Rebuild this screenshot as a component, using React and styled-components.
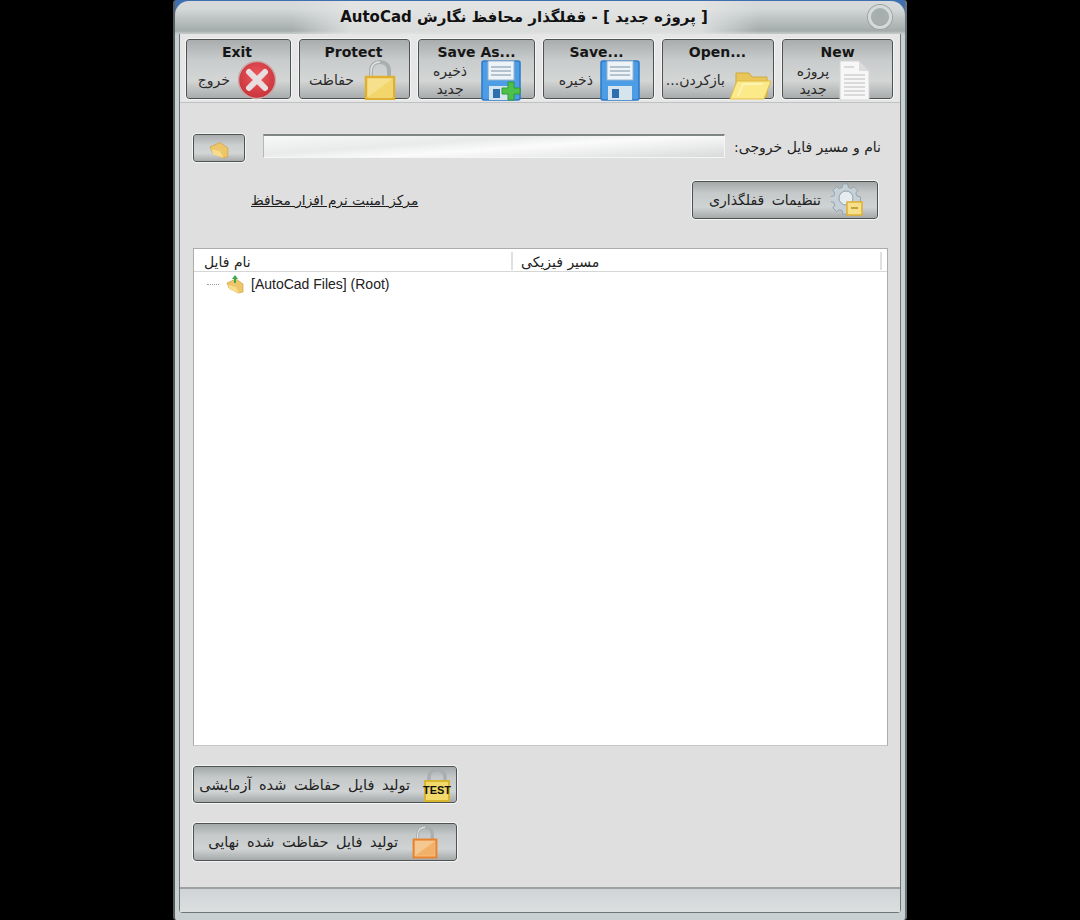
import React from "react";
import styled, { createGlobalStyle } from "styled-components";

const Global = createGlobalStyle`
  html, body { margin: 0; padding: 0; background: #000; }
  body { font-family: "DejaVu Sans", "Liberation Sans", sans-serif; color: #1a1a1a; }
`;

const Win = styled.div`
  width: 734px;
  height: 920px;
  margin: 0 auto;
  box-sizing: border-box;
  display: flex;
  flex-direction: column;
  background: linear-gradient(180deg, #3f6fae 0, #3f6fae 14px, #c9d0d2 15px, #c9d0d2 100%);
  border-radius: 3px;
  overflow: hidden;
  border-left: 2px solid #555b5d;
  border-right: 2px solid #69757a;
`;

const TitleBar = styled.div`
  height: 33px;
  flex: none;
  display: flex;
  align-items: center;
  justify-content: center;
  position: relative;
  border-radius: 14px 14px 0 0;
  margin-top: 1px;
  background:
    linear-gradient(90deg, rgba(228, 229, 229, 0) 16%, rgba(228, 229, 229, 0.85) 24%, rgba(228, 229, 229, 0.85) 72%, rgba(228, 229, 229, 0) 80%),
    linear-gradient(180deg, #d6dada 0, #d4d8d8 8px, #bcc3c3 18px, #a4abab 30px, #c0c5c5 32px);
`;

const TitleText = styled.div`
  font-size: 15px;
  font-weight: bold;
  color: #111;
  white-space: nowrap;
  margin-left: -32px;
  margin-top: -1px;
`;

const WinDot = styled.div`
  position: absolute;
  right: 13px;
  top: 4px;
  width: 24px;
  height: 24px;
  box-sizing: border-box;
  border-radius: 50%;
  border: 3px solid #d5d9d9;
  background: radial-gradient(circle at 50% 45%, #a5acac 0, #a9b0b0 55%, #8b9494 100%);
  box-shadow: 0 0 0 1px #9aa3a3;
`;

const Client = styled.div`
  flex: 1;
  margin: -1px 4px 7px;
  display: flex;
  flex-direction: column;
  background: #dfdfdf;
  border: 1px solid #6d7676;
  border-top: none;
  border-radius: 0 0 4px 4px;
`;

const Toolbar = styled.div`
  height: 70px;
  flex: none;
  box-sizing: border-box;
  padding: 6px 7px 4px 6px;
  display: flex;
  gap: 8px;
  background: #e6e6e6;
  border-bottom: 1px solid #bfc2c2;
`;

const ToolBtn = styled.div`
  width: ${(p) => p.$w}px;
  height: 60px;
  box-sizing: border-box;
  border: 1px solid #4d5252;
  border-radius: 3px;
  outline: 1px solid #f4f4f4;
  background: linear-gradient(180deg, #a9adad 0, #c9cccc 35%, #d4d6d6 70%, #a9acac 100%);
  display: flex;
  flex-direction: column;
`;

const ToolTitle = styled.div`
  font-size: 14px;
  font-weight: bold;
  line-height: 16px;
  padding-top: 4px;
  text-align: center;
  color: #161616;
  height: 18px;
  flex: none;
  padding-right: ${(p) => p.$shift || 0}px;
`;

const ToolBody = styled.div`
  flex: 1;
  min-height: 0;
  display: flex;
  align-items: center;
  justify-content: flex-end;
  gap: ${(p) => p.$gap}px;
  padding-right: ${(p) => p.$pr}px;
`;

const ToolLabel = styled.div`
  direction: rtl;
  font-size: 14px;
  line-height: 18px;
  text-align: center;
  color: #2a2a2a;
  white-space: ${(p) => (p.$wrap ? "normal" : "nowrap")};
  width: ${(p) => (p.$wrap ? p.$wrap + "px" : "auto")};
`;

const IconSvg = styled.svg`
  flex: none;
  display: block;
  position: relative;
  margin-top: ${(p) => p.$mt || 0}px;
`;

const Main = styled.div`
  flex: 1;
  display: flex;
  flex-direction: column;
  padding: 31px 12px 0 13px;
`;

const PathRow = styled.div`
  display: flex;
  align-items: flex-start;
  height: 28px;
`;

const BrowseBtn = styled.div`
  width: 52px;
  height: 28px;
  box-sizing: border-box;
  border: 1px solid #4d5252;
  border-radius: 3px;
  outline: 1px solid #f4f4f4;
  background: linear-gradient(180deg, #a9adad 0, #cdd0d0 40%, #d3d5d5 70%, #a9acac 100%);
  display: flex;
  align-items: center;
  justify-content: center;
`;

const PathInput = styled.div`
  width: 462px;
  height: 24px;
  margin-left: 18px;
  box-sizing: border-box;
  border-top: 2px solid #7f8585;
  border-left: 1px solid #b3b7b7;
  border-right: 1px solid #f5f5f5;
  border-bottom: 1px solid #f5f5f5;
  background: linear-gradient(176deg, #f7f8f8 0, #e9ebeb 35%, #fbfbfb 55%, #d8dada 100%);
`;

const PathLabel = styled.div`
  direction: rtl;
  width: 148px;
  margin-left: 8px;
  line-height: 24px;
  padding-top: 1px;
  font-size: 14px;
  white-space: nowrap;
  color: #222;
`;

const LinkRow = styled.div`
  display: flex;
  align-items: center;
  justify-content: space-between;
  height: 38px;
  margin-top: 19px;
  padding: 0 10px 0 58px;
`;

const SecurityLink = styled.a`
  direction: rtl;
  font-size: 13.7px;
  color: #1c1c1c;
  text-decoration: underline;
  white-space: nowrap;
`;

const ActionBtn = styled.div`
  width: ${(p) => p.$w}px;
  height: ${(p) => p.$h}px;
  box-sizing: border-box;
  border: 1px solid #4d5252;
  border-radius: 3px;
  outline: 1px solid #f4f4f4;
  background: linear-gradient(180deg, #a3a8a8 0, #c6c9c9 30%, #d0d3d3 70%, #a6a9a9 100%);
  display: flex;
  align-items: center;
  justify-content: flex-end;
  gap: ${(p) => p.$gap}px;
  padding-right: ${(p) => p.$pr}px;
`;

const ActionText = styled.div`
  direction: rtl;
  font-size: ${(p) => p.$size}px;
  word-spacing: 3px;
  white-space: nowrap;
  color: #222;
`;

const TreeTable = styled.div`
  height: 498px;
  margin-top: 29px;
  flex: none;
  box-sizing: border-box;
  background: #fff;
  border: 1px solid #a9adad;
  border-bottom-color: #c4c6c6;
`;

const TreeHead = styled.div`
  height: 22px;
  display: grid;
  grid-template-columns: 319px 369px;
  border-bottom: 1px solid #d5d7d7;
`;

const HeadCell = styled.div`
  direction: rtl;
  text-align: left;
  font-size: 14px;
  padding-left: ${(p) => p.$pl}px;
  color: #222;
  height: 18px;
  margin-top: 3px;
  line-height: 20px;
  border-right: 2px solid #dfe1e1;
`;

const TreeRow = styled.div`
  display: flex;
  align-items: center;
  height: 24px;
  padding-left: 13px;
`;

const TreeDots = styled.div`
  width: 12px;
  border-top: 1px dotted #9a9a9a;
  margin-right: 6px;
`;

const TreeName = styled.div`
  font-family: "Liberation Sans", Arial, sans-serif;
  font-size: 14px;
  color: #222;
  margin-left: 6px;
`;

const BottomButtons = styled.div`
  display: flex;
  flex-direction: column;
  gap: 20px;
  margin-top: 20px;
`;

const StatusBar = styled.div`
  height: 23px;
  margin-top: auto;
  flex: none;
  background: linear-gradient(180deg, #d0d4d6, #dcdfe0);
  border-top: 2px solid #9ca1a1;
`;

const Exit = () => (
  <IconSvg width="40" height="40" viewBox="0 0 40 40">
    <defs>
      <radialGradient id="ex" cx="50%" cy="40%" r="60%">
        <stop offset="0" stopColor="#ee5a60" />
        <stop offset="1" stopColor="#c8323a" />
      </radialGradient>
    </defs>
    <circle cx="20" cy="20" r="18.5" fill="url(#ex)" stroke="#c9a5a5" strokeWidth="1.5" />
    <path d="M12 12l16 16M28 12L12 28" stroke="#e9dede" strokeWidth="6" strokeLinecap="round" />
  </IconSvg>
);

const Padlock = ({ size = 32, h = 40, body = "#f2cf55", inner = "#f6e08c", edge = "#e0b030" }) => (
  <IconSvg width={size} height={h} viewBox="0 0 32 40">
    <path d="M7 20V11C7 5 11 2 16 2s9 3 9 9v9" fill="none" stroke="#a9afb1" strokeWidth="4" />
    <path d="M7 20V11C7 5 11 2 16 2" fill="none" stroke="#e2e5e5" strokeWidth="1.4" />
    <rect x="2" y="17" width="28" height="22" fill={inner} stroke={edge} strokeWidth="2.5" />
    <path d="M4 37L28 19V37z" fill={body} opacity=".6" />
  </IconSvg>
);

const Floppy = ({ plus }) => (
  <IconSvg width="40" height="41" viewBox="0 0 40 41">
    <rect x="1" y="1" width="38" height="39" rx="2" fill="#4c9de6" stroke="#2b78c8" strokeWidth="1.5" />
    <rect x="7" y="1" width="26" height="19" fill="#eef3f7" stroke="#98b4cc" />
    <path d="M10 7h20M10 11h20M10 15h20" stroke="#9fb2c2" strokeWidth="1.3" />
    <rect x="8" y="26" width="24" height="14" fill="#d6e4ee" />
    <rect x="12" y="29" width="7" height="9" fill="#2f6fb0" />
    {plus && <path d="M27 22h6v6h6v6h-6v6h-6v-6h-6v-6h6z" fill="#4cc04a" stroke="#2f9a33" />}
  </IconSvg>
);

const Folder = () => (
  <IconSvg width="43" height="30" viewBox="0 0 43 30" $mt="10">
    <path d="M7 27V3h13l3 4h15v20z" fill="#e8c65a" stroke="#d1a93a" />
    <path d="M1 29L8 11h34l-7 18z" fill="#fbe98a" stroke="#e0bb44" />
    <path d="M9 26l5-12h20" fill="none" stroke="#fdf5bf" strokeWidth="1.5" />
  </IconSvg>
);

const Doc = () => (
  <IconSvg width="31" height="41" viewBox="0 0 31 41">
    <path d="M1 1h19l10 10v29H1z" fill="#f7f7f7" stroke="#d4d4d4" />
    <path d="M20 1v10h10z" fill="#dcdcdc" />
    <path d="M5 7h10M5 15h21M5 19h21M5 23h21M5 27h21M5 31h21M5 35h21" stroke="#bdbdbd" />
  </IconSvg>
);

const Gear = () => (
  <IconSvg width="32" height="34" viewBox="0 0 32 34">
    <path
      d="M13 1h5l1 4 3 1 3-2 4 4-2 3 1 3 4 1v5l-4 1-1 3 2 3-4 4-3-2-3 1-1 4h-5l-1-4-3-1-3 2-4-4 2-3-1-3-4-1v-5l4-1 1-3-2-3 4-4 3 2 3-1z"
      fill="#c6d0d6"
      stroke="#8ea0ac"
      transform="scale(.92)"
    />
    <circle cx="15" cy="15" r="7" fill="#e6ecef" stroke="#8ea0ac" />
    <rect x="16" y="19" width="15" height="13" fill="#f6e08c" stroke="#e0b030" strokeWidth="1.5" />
    <path d="M20 25h7" stroke="#b58c20" strokeWidth="1.5" />
  </IconSvg>
);

const SmallFolder = ({ arrow, size = 20 }) => (
  <IconSvg width={size} height={size} viewBox="0 0 20 20">
    <path d="M2 9l9-4 7 5v8l-5 1L4 14z" fill="#eec66a" stroke="#cfa23c" strokeWidth=".7" />
    <path d="M3 11l8 2 3 6-9-3z" fill="#f7dc8c" />
    {arrow && <path d="M10 1l3 4h-2v4H9V5H7z" fill="#3da94a" />}
  </IconSvg>
);

const TestLock = () => (
  <IconSvg width="30" height="34" viewBox="0 0 30 34">
    <path d="M7 15V9c0-5 4-7 8-7s8 2 8 7v6" fill="none" stroke="#a9afb1" strokeWidth="3.5" />
    <rect x="3" y="13" width="24" height="20" fill="#f2d96a" stroke="#d8b52e" strokeWidth="2" />
    <text x="15" y="26" textAnchor="middle" fontFamily="Liberation Sans" fontWeight="bold" fontSize="11" fill="#111">
      TEST
    </text>
  </IconSvg>
);

const tools = [
  { title: "Exit", label: "خروج", w: 105, gap: 7, pr: 13, icon: <Exit />, shift: 3 },
  { title: "Protect", label: "حفاظت", w: 111, gap: 10, pr: 13, icon: <Padlock />, shift: 2 },
  { title: "Save As...", label: "ذخیره جدید", wrap: 44, w: 117, gap: 9, pr: 13, icon: <Floppy plus /> },
  { title: "Save...", label: "ذخیره", w: 111, gap: 7, pr: 13, icon: <Floppy />, shift: 4 },
  { title: "Open...", label: "بازکردن...", w: 112, gap: 4, pr: 1, icon: <Folder />, shift: 1 },
  { title: "New", label: "پروژه جدید", wrap: 40, w: 111, gap: 6, pr: 22, icon: <Doc /> },
];

export default function App() {
  return (
    <>
      <Global />
      <Win>
        <TitleBar>
          <TitleText dir="rtl">[ پروژه جدید ] - قفلگذار محافظ نگارش AutoCad</TitleText>
          <WinDot />
        </TitleBar>
        <Client>
          <Toolbar>
            {tools.map((t) => (
              <ToolBtn key={t.title} $w={t.w}>
                <ToolTitle $shift={t.shift}>{t.title}</ToolTitle>
                <ToolBody $gap={t.gap} $pr={t.pr}>
                  <ToolLabel $wrap={t.wrap}>{t.label}</ToolLabel>
                  {t.icon}
                </ToolBody>
              </ToolBtn>
            ))}
          </Toolbar>
          <Main>
            <PathRow>
              <BrowseBtn>
                <SmallFolder size={22} />
              </BrowseBtn>
              <PathInput />
              <PathLabel>نام و مسیر فایل خروجی:</PathLabel>
            </PathRow>
            <LinkRow>
              <SecurityLink>مرکز امنیت نرم افزار محافظ</SecurityLink>
              <ActionBtn $w={186} $h={38} $gap={10} $pr={14}>
                <ActionText $size={14}>تنظیمات قفلگذاری</ActionText>
                <Gear />
              </ActionBtn>
            </LinkRow>
            <TreeTable>
              <TreeHead>
                <HeadCell $pl={10}>نام فایل</HeadCell>
                <HeadCell $pl={8}>مسیر فیزیکی</HeadCell>
              </TreeHead>
              <TreeRow>
                <TreeDots />
                <SmallFolder arrow />
                <TreeName>[AutoCad Files] (Root)</TreeName>
              </TreeRow>
            </TreeTable>
            <BottomButtons>
              <ActionBtn $w={264} $h={37} $gap={12} $pr={4}>
                <ActionText $size={14.5}>تولید فایل حفاظت شده آزمایشی</ActionText>
                <TestLock />
              </ActionBtn>
              <ActionBtn $w={264} $h={38} $gap={14} $pr={18}>
                <ActionText $size={14.5}>تولید فایل حفاظت شده نهایی</ActionText>
                <Padlock size={26} h={34} body="#f0a050" inner="#f4c890" edge="#e8832c" />
              </ActionBtn>
            </BottomButtons>
          </Main>
          <StatusBar />
        </Client>
      </Win>
    </>
  );
}
